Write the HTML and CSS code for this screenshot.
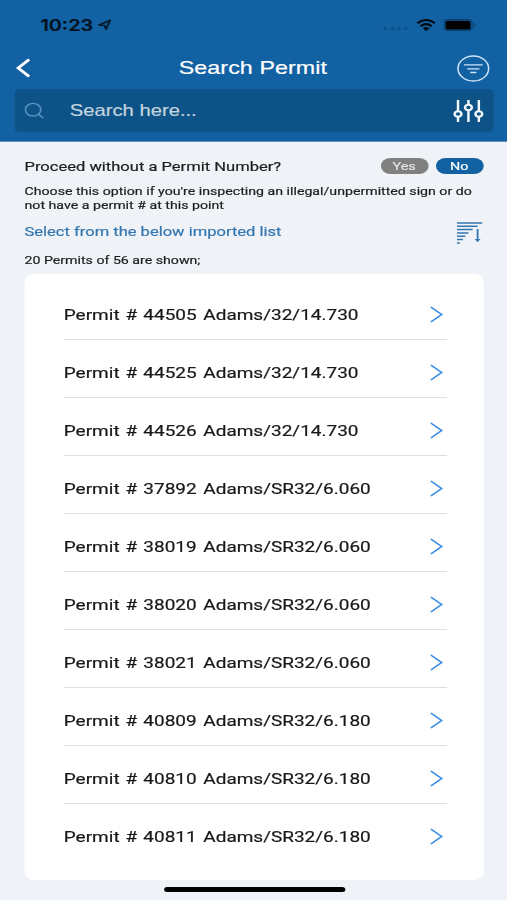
FILE: index.html
```
<!DOCTYPE html>
<html lang="en">
<head>
<meta charset="utf-8">
<title>Search Permit</title>
<link rel="stylesheet" href="styles.css">
</head>
<body>
<div class="app">
  <header class="header">
    <div class="status">
      <span class="time">10:23</span>
      <svg class="location" width="11" height="12" viewBox="0 0 11 12"><path d="M1 6 10 1.2 6.6 10.3 5.4 6.5Z" fill="none" stroke="#06182b" stroke-width="1.6" stroke-linejoin="round"/></svg>
      <span class="signal"><i></i><i></i><i></i><i></i></span>
      <svg class="wifi" width="16" height="12" viewBox="0 0 16 12"><g fill="none" stroke="#030b13" stroke-width="2"><path d="M.8 4.2Q8-2.2 15.2 4.2"/><path d="M3.4 7.2Q8 3.1 12.6 7.2"/></g><path d="M5.3 9.2Q8 7 10.7 9.2L8 12Z" fill="#030b13"/></svg>
      <svg class="battery" width="27" height="12" viewBox="0 0 27 12"><rect x=".5" y=".5" width="23" height="11" rx="3" fill="none" stroke="#0b3e6b"/><rect x="1.8" y="1.7" width="20.4" height="8.8" rx="1.5" fill="#000"/><path d="M25 4v4q1.4-.6 1.4-2T25 4Z" fill="#0b4374"/></svg>
    </div>
    <div class="nav">
      <svg class="back" width="12" height="20" viewBox="0 0 12 20"><path d="M10.8 1.5 1.8 10l9 8.5" fill="none" stroke="#fff" stroke-width="2.5"/></svg>
      <h1 class="title">Search Permit</h1>
      <svg class="filter" width="27" height="27" viewBox="0 0 27 27" fill="none" stroke="#cfe4f7" stroke-width="1.3"><circle cx="13.5" cy="13.5" r="12.5"/><path d="M5.8 9.9h15.4M8.5 13.9h10M11 17.5h5"/></svg>
    </div>
    <div class="search">
      <svg class="lens" width="16" height="17" viewBox="0 0 16 17" fill="none" stroke="#5d93c2" stroke-width="1.4"><circle cx="7" cy="7.7" r="6.3"/><path d="m11.4 12.3 3.8 3.6"/></svg>
      <span class="placeholder">Search here...</span>
      <svg class="sliders" width="25" height="24" viewBox="0 0 25 24" fill="none" stroke="#f2f8fc" stroke-width="2"><path d="M4 1v11M4 18v5M12.5 1v4M12.5 11v12M21 1v11M21 18v5"/><circle cx="4" cy="15" r="2.8"/><circle cx="12.5" cy="8.5" r="2.8"/><circle cx="21" cy="15" r="2.8"/></svg>
    </div>
  </header>
  <main class="content">
    <div class="question">
      <span class="question-text">Proceed without a Permit Number?</span>
      <span class="pill pill-yes">Yes</span>
      <span class="pill pill-no">No</span>
    </div>
    <p class="hint">Choose this option if you're inspecting an illegal/unpermitted sign or do<br>not have a permit # at this point</p>
    <div class="import">
      <span class="import-text">Select from the below imported list</span>
      <svg class="sort" width="21" height="22" viewBox="0 0 21 22" fill="none" stroke="#3476ae" stroke-width="1.5"><path d="M0 1h21M0 4.2h17M0 7.6h13M0 11h9.5M0 14.2h7M0 17.6h5M0 21h2.5M17 7v11"/><path d="M14.6 17h4.8L17 20.3Z" fill="#3476ae" stroke="none"/></svg>
    </div>
    <p class="count">20 Permits of 56 are shown;</p>
    <ul class="list">
      <li class="row"><span class="number">Permit # 44505</span><span class="place">Adams/32/14.730</span><svg class="chevron" viewBox="0 0 11 17"><path d="M.8 1 9.6 8.5.8 16"/></svg></li>
      <li class="row"><span class="number">Permit # 44525</span><span class="place">Adams/32/14.730</span><svg class="chevron" viewBox="0 0 11 17"><path d="M.8 1 9.6 8.5.8 16"/></svg></li>
      <li class="row"><span class="number">Permit # 44526</span><span class="place">Adams/32/14.730</span><svg class="chevron" viewBox="0 0 11 17"><path d="M.8 1 9.6 8.5.8 16"/></svg></li>
      <li class="row"><span class="number">Permit # 37892</span><span class="place">Adams/SR32/6.060</span><svg class="chevron" viewBox="0 0 11 17"><path d="M.8 1 9.6 8.5.8 16"/></svg></li>
      <li class="row"><span class="number">Permit # 38019</span><span class="place">Adams/SR32/6.060</span><svg class="chevron" viewBox="0 0 11 17"><path d="M.8 1 9.6 8.5.8 16"/></svg></li>
      <li class="row"><span class="number">Permit # 38020</span><span class="place">Adams/SR32/6.060</span><svg class="chevron" viewBox="0 0 11 17"><path d="M.8 1 9.6 8.5.8 16"/></svg></li>
      <li class="row"><span class="number">Permit # 38021</span><span class="place">Adams/SR32/6.060</span><svg class="chevron" viewBox="0 0 11 17"><path d="M.8 1 9.6 8.5.8 16"/></svg></li>
      <li class="row"><span class="number">Permit # 40809</span><span class="place">Adams/SR32/6.180</span><svg class="chevron" viewBox="0 0 11 17"><path d="M.8 1 9.6 8.5.8 16"/></svg></li>
      <li class="row"><span class="number">Permit # 40810</span><span class="place">Adams/SR32/6.180</span><svg class="chevron" viewBox="0 0 11 17"><path d="M.8 1 9.6 8.5.8 16"/></svg></li>
      <li class="row"><span class="number">Permit # 40811</span><span class="place">Adams/SR32/6.180</span><svg class="chevron" viewBox="0 0 11 17"><path d="M.8 1 9.6 8.5.8 16"/></svg></li>
    </ul>
  </main>
  <div class="home"></div>
</div>
</body>
</html>
```
FILE: styles.css
```
* { box-sizing: border-box; }
html, body { margin: 0; height: 900px; overflow: hidden; background: #eff3f8; }
ul, p, h1 { margin: 0; padding: 0; font-weight: 400; }
svg { display: block; flex: none; }

.app {
  width: 414px;
  height: 900px;
  display: flex;
  flex-direction: column;
  transform: scaleX(1.22464);
  transform-origin: 0 0;
  font-family: Roboto, sans-serif;
  color: #1b1d20;
  white-space: nowrap;
  -webkit-text-stroke: 0.2px;
}

.header { height: 142px; flex: none; background: #1261a3; border-bottom: 1px solid #5e95c4; }
.status { height: 48px; display: flex; align-items: center; padding: 1px 26px 0 33px; }
.time { font: 600 16.2px/20px Inter, sans-serif; color: #04111f; width: 43px; }
.location { margin-left: 4px; }
.signal { display: flex; gap: 2.8px; margin: 7px 7px 0 auto; }
.signal i { width: 2.8px; height: 3px; border-radius: 50%; background: #0e4f87; }
.battery { margin-left: 6px; margin-right: -1px; }
.nav { height: 41px; display: flex; align-items: center; justify-content: space-between; padding: 0 14px 1px 12.5px; }
.title { font: 400 19px/24px "Liberation Sans", sans-serif; color: #fff; letter-spacing: 0.05px; margin-left: 15.5px; }
.search {
  height: 43px;
  margin: 0 11px 0 11.5px;
  padding: 0 8px 0 8.5px;
  display: flex;
  align-items: center;
  background: #0d5387;
  border-radius: 4px;
}
.placeholder { font: 400 16.5px/22px "Liberation Sans", sans-serif; color: #c3d3df; margin-left: 21px; padding-bottom: 1px; }
.sliders { margin-left: auto; }

.content { padding: 13px 19.5px 0 20px; }
.question { height: 22px; display: flex; align-items: center; }
.question-text { font-size: 13.5px; margin-right: auto; padding-bottom: 1px; }
.pill { width: 39px; height: 16px; border-radius: 8px; font-size: 11.7px; line-height: 16px; text-align: center; color: #fff; }
.pill-yes { background: #808080; color: #e4e4e4; }
.pill-no { background: #1261a3; margin-left: 6px; }
.hint { font-size: 11.57px; line-height: 13.5px; margin-top: 8px; }
.import { height: 24px; display: flex; align-items: center; margin-top: 9px; }
.import-text { font-size: 13.5px; color: #3476ae; margin: -5px auto 0 0; }
.sort { margin-right: 0.5px; }
.count { font-size: 11.57px; line-height: 16px; margin-top: 7px; }
.list { list-style: none; background: #fff; border-radius: 8px; height: 606px; margin-top: 6px; padding: 8px 29.5px 0 32px; }
.row { height: 58px; display: flex; align-items: center; padding: 9px 3px 0 0; border-bottom: 1px solid #dedfe1; }
.row:last-child { border-bottom: 0; padding-bottom: 1px; }
.number, .place { font-size: 15.5px; line-height: 20px; color: #17181a; }
.number { width: 114px; letter-spacing: 0.02px; word-spacing: 1px; }
.chevron { width: 11px; height: 17px; margin: -2px 0 0 auto; fill: none; stroke: #3d8fe8; stroke-width: 1.6; }
.home { width: 148px; height: 5px; border-radius: 3px; background: #000; margin: 7px 0 0 133.5px; }
```
